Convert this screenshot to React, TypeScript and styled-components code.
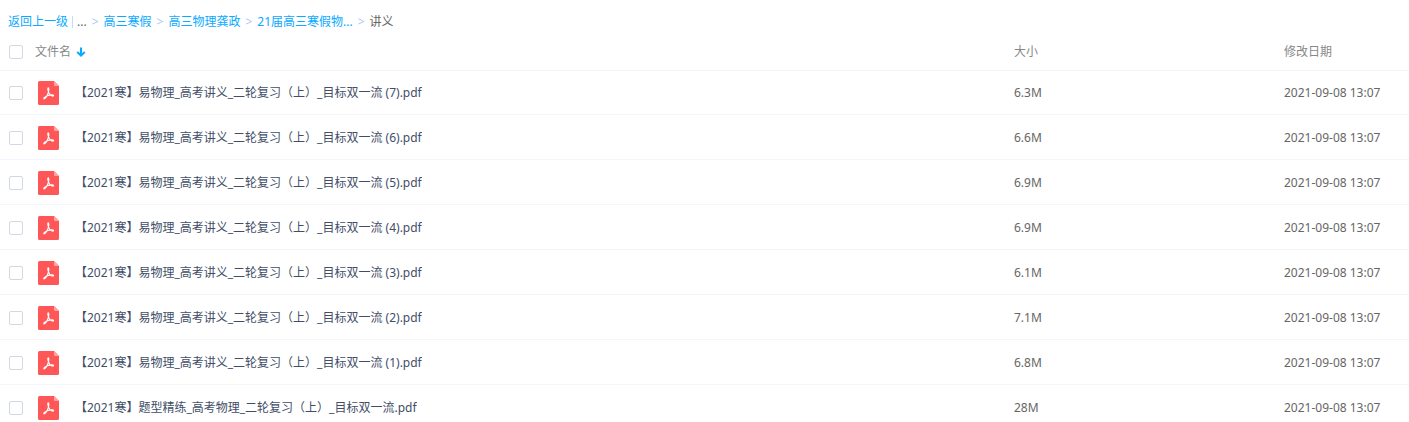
import React from "react";
import styled, { createGlobalStyle } from "styled-components";

const GlobalStyle = createGlobalStyle`
  *, *::before, *::after { box-sizing: border-box; }
  body {
    margin: 0;
    background: #fff;
    color: #666;
    font: 12px/20px "Noto Sans", "Noto Sans CJK SC", sans-serif;
  }
`;

const Breadcrumb = styled.nav`
  display: flex;
  align-items: center;
  padding: 12px 8px 0;
`;

const Trail = styled.ol`
  display: flex;
  margin: 0;
  padding: 0;
  list-style: none;
`;

const Crumb = styled.li`
  &:not(:last-child)::after {
    content: ">";
    padding: 0 5px;
    color: #a9c8f5;
  }
`;

const CrumbLink = styled.a`
  color: #09aaff;
  text-decoration: none;
`;

const Divider = styled.span`
  width: 1px;
  height: 12px;
  margin: 0 4px;
  background: #c4dbfe;
`;

const FileTable = styled.table`
  width: 100%;
  table-layout: fixed;
  border-collapse: separate;
  border-spacing: 0;
`;

const HeaderCell = styled.th<{ $width?: number }>`
  width: ${(p) => (p.$width ? `${p.$width}px` : "auto")};
  height: 39px;
  padding: 2px 0 0;
  border-bottom: 1px solid #f2f6fd;
  color: #888;
  font-weight: 400;
  text-align: left;
`;

const Cell = styled.td`
  padding: 1px 0 0;
  border-bottom: 1px solid #f2f6fd;
`;

const FileRow = styled.tr`
  height: 45px;
  &:first-child { height: 44px; }
  &:first-child ${Cell} { padding-top: 0; }
`;

const NameGroup = styled.div`
  display: flex;
  align-items: center;
  padding-left: 9px;
`;

const Checkbox = styled.input.attrs({ type: "checkbox" })`
  appearance: none;
  flex: none;
  width: 14px;
  height: 14px;
  margin: 0;
  border: 1px solid #d3d9e2;
  border-radius: 2px;
  background: #fff;
  &:checked { border-color: #09aaff; background: #09aaff; }
`;

const SortButton = styled.button`
  display: flex;
  align-items: center;
  gap: 5px;
  margin-left: 12px;
  padding: 0;
  border: 0;
  background: none;
  color: inherit;
  font: inherit;
  cursor: pointer;
`;

const IconSlot = styled.span`
  display: flex;
  margin: 0 16px 0 15px;
`;

const FileLink = styled.a`
  overflow: hidden;
  color: #424e67;
  text-decoration: none;
  text-overflow: ellipsis;
  white-space: nowrap;
`;

const SortArrow = () => (
  <svg width="10" height="10" viewBox="0 0 10 10" fill="none" stroke="#09aaff" strokeWidth="2" aria-hidden="true">
    <path d="M5 0.5V8.5M1.2 5L5 8.6L8.8 5" />
  </svg>
);

const PdfIcon = () => (
  <svg width="21" height="24" viewBox="0 0 21 24" fill="none" aria-hidden="true">
    <path d="M1.5 0H16L21 5V22.5Q21 24 19.5 24H1.5Q0 24 0 22.5V1.5Q0 0 1.5 0Z" fill="#ff5757" />
    <path d="M16 0L21 5H17Q16 5 16 4Z" fill="#ffa3a3" />
    <path
      d="M10.2 6.8C9.3 7 9.9 9.3 10.6 11.1C11.5 13.4 13.3 15.1 14.9 15.1C16 15 15.7 14 14.2 13.9C11.4 13.8 8.5 14.9 6.8 16.1C5.6 17 5.5 18.1 6.3 17.8C7.6 17.2 9.6 13.8 10.4 11.1C11 9 11 6.8 10.2 6.8Z"
      stroke="#fff"
      strokeWidth="1.1"
      strokeLinejoin="round"
    />
  </svg>
);

const path = ["高三寒假", "高三物理龚政", "21届高三寒假物..."];

const lecture = (n: number) => `【2021寒】易物理_高考讲义_二轮复习（上）_目标双一流 (${n}).pdf`;

const files = [
  { name: lecture(7), size: "6.3M" },
  { name: lecture(6), size: "6.6M" },
  { name: lecture(5), size: "6.9M" },
  { name: lecture(4), size: "6.9M" },
  { name: lecture(3), size: "6.1M" },
  { name: lecture(2), size: "7.1M" },
  { name: lecture(1), size: "6.8M" },
  { name: "【2021寒】题型精练_高考物理_二轮复习（上）_目标双一流.pdf", size: "28M" },
].map((file) => ({ ...file, modified: "2021-09-08 13:07" }));

export default function App() {
  return (
    <main lang="zh-CN">
      <GlobalStyle />
      <Breadcrumb aria-label="路径">
        <CrumbLink href="#up">返回上一级</CrumbLink>
        <Divider />
        <Trail>
          <Crumb>...</Crumb>
          {path.map((label) => (
            <Crumb key={label}>
              <CrumbLink href="#folder">{label}</CrumbLink>
            </Crumb>
          ))}
          <Crumb aria-current="page">讲义</Crumb>
        </Trail>
      </Breadcrumb>
      <FileTable>
        <thead>
          <tr>
            <HeaderCell>
              <NameGroup>
                <Checkbox aria-label="全选" />
                <SortButton type="button">
                  文件名
                  <SortArrow />
                </SortButton>
              </NameGroup>
            </HeaderCell>
            <HeaderCell $width={270}>大小</HeaderCell>
            <HeaderCell $width={125}>修改日期</HeaderCell>
          </tr>
        </thead>
        <tbody>
          {files.map((file) => (
            <FileRow key={file.name}>
              <Cell>
                <NameGroup>
                  <Checkbox aria-label={file.name} />
                  <IconSlot>
                    <PdfIcon />
                  </IconSlot>
                  <FileLink href="#file">{file.name}</FileLink>
                </NameGroup>
              </Cell>
              <Cell>{file.size}</Cell>
              <Cell>{file.modified}</Cell>
            </FileRow>
          ))}
        </tbody>
      </FileTable>
    </main>
  );
}
